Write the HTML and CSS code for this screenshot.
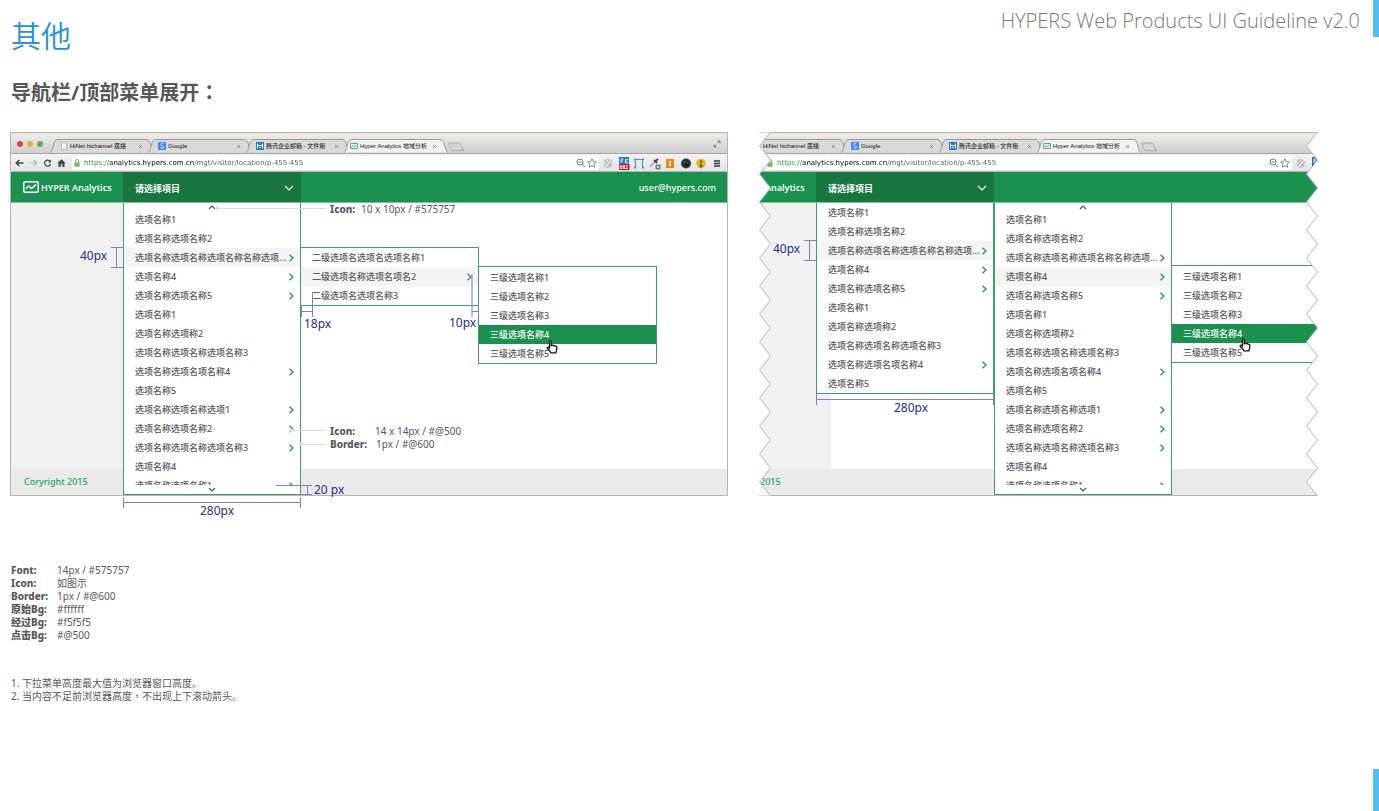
FILE: index.html
```html
<!DOCTYPE html>
<html lang="zh-CN">
<head>
<meta charset="utf-8">
<title>HYPERS Web Products UI Guideline v2.0</title>
<link rel="stylesheet" href="styles.css">
</head>
<body>
<svg class="sprite" aria-hidden="true">
  <symbol id="right" viewBox="0 0 7 8"><path d="M1.5 .8 5 4 1.5 7.200" fill="none" stroke="#1d9a55" stroke-width="1.300"/></symbol>
  <symbol id="up" viewBox="0 0 8 5"><path d="M1 4 4 1 7 4" fill="none" stroke="#575757" stroke-width="1.200"/></symbol>
  <symbol id="down" viewBox="0 0 8 5"><path d="M1 1 4 4 7 1" fill="none" stroke="#575757" stroke-width="1.200"/></symbol>
  <symbol id="tab" viewBox="0 0 104 14"><path d="M0 13.500C3 13 3 1 7 .5H97C101 1 101 13 104 13.500" fill="currentColor" stroke="#9a9a9a"/></symbol>
  <symbol id="newtab" viewBox="0 0 18 10"><path d="M1.500 1H12C14 1 15 8 17 8.500H6C3 8.500 3 3 1.500 1Z" fill="#d6d6d6" stroke="#aaa"/></symbol>
  <symbol id="close" viewBox="0 0 5 5"><path d="M1 1 4 4M4 1 1 4" stroke="#777" stroke-width=".8"/></symbol>
  <symbol id="doc" viewBox="0 0 8 8"><path d="M1.500 .5H4.500L6.500 2.500V7.500H1.500Z" fill="#fff" stroke="#999" stroke-width=".7"/></symbol>
  <symbol id="goog" viewBox="0 0 8 8"><rect width="8" height="8" rx="1" fill="#4285f4"/><path d="M5.500 1.300H3.600A1.200 1.200 0 1 0 4.500 3.500L4.800 4.200A1.300 1.300 0 1 1 3 4.800" fill="none" stroke="#fff" stroke-width=".8"/></symbol>
  <symbol id="mail" viewBox="0 0 8 8"><rect width="8" height="8" fill="#1b7fc4"/><path d="M1.500 1.500V6.500M6.500 1.500V6.500M1.500 3.500H6.500M3 5.500H5" stroke="#fff"/></symbol>
  <symbol id="chart" viewBox="0 0 16 12"><rect x=".8" y=".8" width="14.400" height="10.400" rx="1.200" fill="none" stroke="currentColor" stroke-width="1.500"/><path d="M2.800 7.800 5.800 5 8.500 7.500 13 3.600" fill="none" stroke="currentColor" stroke-width="1.500"/></symbol>
  <symbol id="expand" viewBox="0 0 8 8"><path d="M4.500 1H7V3.500M7 1 4.700 3.300M3.500 7H1V4.500M1 7 3.300 4.700" fill="none" stroke="#777"/></symbol>
  <symbol id="back" viewBox="0 0 9 8"><path d="M8.500 4H1.500M4.300 1 1.300 4 4.300 7" fill="none" stroke="#444" stroke-width="1.500"/></symbol>
  <symbol id="forward" viewBox="0 0 9 8"><path d="M.5 4H7.500M4.700 1 7.700 4 4.700 7" fill="none" stroke="#bbb" stroke-width="1.200"/></symbol>
  <symbol id="reload" viewBox="0 0 8 8"><path d="M6.500 2.300A3 3 0 1 0 7 5" fill="none" stroke="#444" stroke-width="1.300"/><path d="M7.500 .5V3.500H4.500Z" fill="#444"/></symbol>
  <symbol id="home" viewBox="0 0 9 8"><path d="M4.500 .3 8.800 4.300H7.500V8H5.300V5.300H3.700V8H1.500V4.300H.2Z" fill="#444"/></symbol>
  <symbol id="lock" viewBox="0 0 6 8"><path d="M1.500 3.500V2A1.500 1.500 0 0 1 4.500 2V3.500" fill="none" stroke="#999"/><rect x=".3" y="3.300" width="5.400" height="4.400" rx=".6" fill="#79c15a"/></symbol>
  <symbol id="lens" viewBox="0 0 10 10"><circle cx="4" cy="4" r="3" fill="none" stroke="#777"/><path d="M2.500 4H5.500M6.200 6.200 9 9" stroke="#777"/></symbol>
  <symbol id="star" viewBox="0 0 10 10"><path d="M5 .8 6.300 3.600 9.400 4 7.100 6.100 7.700 9.200 5 7.700 2.300 9.200 2.900 6.100 .6 4 3.700 3.600Z" fill="#fff" stroke="#777" stroke-width=".9"/></symbol>
  <symbol id="swirl" viewBox="0 0 12 12"><circle cx="6" cy="6" r="4.500" fill="#c4c4c4"/><path d="M2.500 6 6 2.500M4 9 8.500 3.500M7 9.500 10 6" stroke="#fff"/><path d="M3.500 3.500 5 5M7 7 9 8.500" stroke="#888"/></symbol>
  <symbol id="fe" viewBox="0 0 12 13"><rect x="1" width="10" height="8" fill="#2a78c8"/><path d="M3 6V2H5.500M3 4H5M10 6H7.500V2.500H10M7.500 4.200H9.500" fill="none" stroke="#fff" stroke-width=".8"/><rect x="1" y="7" width="10.500" height="6" rx="1" fill="#b80d1a"/></symbol>
  <symbol id="frame" viewBox="0 0 12 12"><path d="M1.500 2H10.500M2.500 10V3M9.500 10V3" fill="none" stroke="#4d94c4" stroke-width="1.200"/><path d="M1 1H3V3H1ZM9 1H11V3H9ZM1 9H3V11H1ZM9 9H11V11H9Z" fill="#4d94c4"/></symbol>
  <symbol id="picker" viewBox="0 0 12 12"><path d="M1 9 6 4" stroke="#999" stroke-width="1.500"/><path d="M5 2.500 8 5.500M6.500 4 9 1.500" stroke="#444" stroke-width="1.800"/><rect x="6.500" y="7" width="5" height="5" rx="1" fill="#777"/><rect x="8" y="8.500" width="2" height="2" fill="#ddd"/></symbol>
  <symbol id="orange" viewBox="0 0 12 12"><rect x="2" y="1.500" width="8" height="9" fill="#f58220"/><path d="M6 3.500V8.500" stroke="#fff" stroke-width="1.500"/></symbol>
  <symbol id="lensball" viewBox="0 0 12 12"><circle cx="6" cy="6" r="5" fill="#333"/><circle cx="6" cy="6" r="2.800" fill="#111"/><path d="M4 7A2.200 2.200 0 0 1 6 4" fill="none" stroke="#35b35e"/><path d="M7 4.500 8 6.500" stroke="#507de0"/></symbol>
  <symbol id="yellow" viewBox="0 0 12 12"><circle cx="6" cy="6" r="4.800" fill="#f3b41b"/><path d="M4.500 7 6 5.500 8 8.500 6.500 10H5Z" fill="#7a5a1d"/><circle cx="6" cy="4" r="1.500" fill="#4f8a3c"/></symbol>
  <symbol id="burger" viewBox="0 0 12 12"><path d="M3 3.500H9M3 6H9M3 8.500H9" stroke="#333" stroke-width="1.500"/></symbol>
  <symbol id="hand" viewBox="0 0 12 14"><path d="M3.500 8V1.800C3.500 .5 5.300 .5 5.300 1.800V5.500C6 4.800 7 5 7.200 5.700 8 5.200 8.900 5.500 9.100 6.200 10 6 10.800 6.500 10.800 7.300V9.500L9.800 12.800H4.800L3.800 11 1.300 8.500C.7 7.500 2 6.700 2.700 7.300Z" fill="#fff" stroke="#111" stroke-width="1.300"/></symbol>
</svg>

<header class="page-head">
  <h1>其他</h1>
  <p class="product">HYPERS Web Products UI Guideline v2.0</p>
</header>

<main class="page">
  <h2>导航栏/顶部菜单展开<span class="mid" lang="zh-TW">：</span></h2>

  <div class="figures">
    <figure class="figure">
      <div class="window">
        <div class="tabstrip">
          <span class="lights"><i class="red"></i><i class="amber"></i><i class="green"></i></span>
          <button class="tab"><svg class="tab-shape"><use href="#tab"/></svg><svg class="fav"><use href="#doc"/></svg><span>HiNet hichannel 廣播</span><svg class="x"><use href="#close"/></svg></button>
          <button class="tab"><svg class="tab-shape"><use href="#tab"/></svg><svg class="fav"><use href="#goog"/></svg><span>Google</span><svg class="x"><use href="#close"/></svg></button>
          <button class="tab"><svg class="tab-shape"><use href="#tab"/></svg><svg class="fav"><use href="#mail"/></svg><span>腾讯企业邮箱 - 文件箱</span><svg class="x"><use href="#close"/></svg></button>
          <button class="tab active"><svg class="tab-shape"><use href="#tab"/></svg><svg class="fav chart"><use href="#chart"/></svg><span>Hyper Analytics 地域分析</span><svg class="x"><use href="#close"/></svg></button>
          <button class="newtab" aria-label="New tab"><svg><use href="#newtab"/></svg></button>
          <svg class="expand"><use href="#expand"/></svg>
        </div>
        <div class="toolbar">
          <div class="history"><svg><use href="#back"/></svg><svg><use href="#forward"/></svg><svg><use href="#reload"/></svg><svg><use href="#home"/></svg></div>
          <div class="omnibox"><svg class="lock"><use href="#lock"/></svg><input type="text" aria-label="Address" value="https://analytics.hypers.com.cn/mgt/visitor/location/p-455-455"><svg><use href="#lens"/></svg><svg><use href="#star"/></svg></div>
          <div class="extensions"><svg><use href="#swirl"/></svg><span class="ext-badge"><svg><use href="#fe"/></svg><b>082</b></span><svg><use href="#frame"/></svg><svg><use href="#picker"/></svg><svg><use href="#orange"/></svg><svg><use href="#lensball"/></svg><svg><use href="#yellow"/></svg><svg><use href="#burger"/></svg></div>
        </div>
        <nav class="navbar">
          <a class="brand" href="#"><svg><use href="#chart"/></svg>HYPER Analytics</a>
          <button class="picker">请选择项目<svg viewBox="0 0 10 6"><path d="M1 1 5 5 9 1" fill="none" stroke="#fff" stroke-width="1.200"/></svg></button>
          <a class="user" href="#">user@hypers.com</a>
        </nav>
        <div class="content"></div>
        <footer class="foot">Coryright 2015</footer>
      </div>

      <div class="menu scroll first">
        <svg class="arrow-up"><use href="#up"/></svg>
        <ul>
          <li><a href="#">选项名称1</a></li>
          <li><a href="#">选项名称选项名称2</a></li>
          <li><a class="hover" href="#">选项名称选项名称选项名称名称选项...<svg><use href="#right"/></svg></a></li>
          <li><a href="#">选项名称4<svg><use href="#right"/></svg></a></li>
          <li><a href="#">选项名称选项名称5<svg><use href="#right"/></svg></a></li>
          <li><a href="#">选项名称1</a></li>
          <li><a href="#">选项名称选项称2</a></li>
          <li><a href="#">选项名称选项名称选项名称3</a></li>
          <li><a href="#">选项名称选项名项名称4<svg><use href="#right"/></svg></a></li>
          <li><a href="#">选项名称5</a></li>
          <li><a href="#">选项名称选项名称选项1<svg><use href="#right"/></svg></a></li>
          <li><a href="#">选项名称选项名称2<svg><use href="#right"/></svg></a></li>
          <li><a href="#">选项名称选项名称选项名称3<svg><use href="#right"/></svg></a></li>
          <li><a href="#">选项名称4</a></li>
          <li><a href="#">选项名称选项名称1<svg><use href="#right"/></svg></a></li>
        </ul>
        <svg class="arrow-down"><use href="#down"/></svg>
      </div>
      <div class="menu second">
        <ul>
          <li><a href="#">二级选项名选项名选项名称1</a></li>
          <li><a class="hover" href="#">二级选项名称选项名项名2<svg><use href="#right"/></svg></a></li>
          <li><a href="#">二级选项名选项名称3</a></li>
        </ul>
      </div>
      <div class="menu third">
        <ul>
          <li><a href="#">三级选项名称1</a></li>
          <li><a href="#">三级选项名称2</a></li>
          <li><a href="#">三级选项名称3</a></li>
          <li><a class="active" href="#">三级选项名称4</a></li>
          <li><a href="#">三级选项名称5</a></li>
        </ul>
      </div>

      <svg class="notes-layer" width="718" height="390" viewBox="10 132 718 390">
        <g class="dim">
          <path d="M111 247.500H123M111 267.500H123M116.500 247V268"/>
          <path d="M312.500 292V317M301.500 305V317M301 311.500H312"/>
          <path class="soft" d="M472 274V317"/>
          <path d="M478.500 305V317M472 311.500H478"/>
          <path d="M276 485.500H312M301 494.500H312M307.500 485V495"/>
          <path d="M123.500 497V508M300.500 497V508M123 502.500H301"/>
        </g>
        <g class="dim-text">
          <text x="80" y="260">40px</text>
          <text x="304" y="328">18px</text>
          <text x="449" y="327">10px</text>
          <text x="314" y="494">20 px</text>
          <text x="200" y="515">280px</text>
        </g>
        <g class="lead">
          <path d="M217 208.500H326M291 430.500H326M301 444.500H326"/>
          <circle cx="217" cy="208" r="2"/><circle cx="291" cy="430" r="2"/><circle cx="301" cy="444" r="2"/>
        </g>
        <g class="lead-text">
          <text x="330" y="213" class="strong">Icon:</text><text x="361" y="213">10 x 10px / #575757</text>
          <text x="330" y="435" class="strong">Icon:</text><text x="375" y="435">14 x 14px / #@500</text>
          <text x="330" y="448" class="strong">Border:</text><text x="376" y="448">1px / #@600</text>
        </g>
        <use href="#hand" x="546" y="340" width="12" height="14"/>
      </svg>
    </figure>

    <figure class="figure torn">
      <div class="window">
        <div class="tabstrip">
          <span class="lights"><i class="red"></i><i class="amber"></i><i class="green"></i></span>
          <button class="tab"><svg class="tab-shape"><use href="#tab"/></svg><svg class="fav"><use href="#doc"/></svg><span>HiNet hichannel 廣播</span><svg class="x"><use href="#close"/></svg></button>
          <button class="tab"><svg class="tab-shape"><use href="#tab"/></svg><svg class="fav"><use href="#goog"/></svg><span>Google</span><svg class="x"><use href="#close"/></svg></button>
          <button class="tab"><svg class="tab-shape"><use href="#tab"/></svg><svg class="fav"><use href="#mail"/></svg><span>腾讯企业邮箱 - 文件箱</span><svg class="x"><use href="#close"/></svg></button>
          <button class="tab active"><svg class="tab-shape"><use href="#tab"/></svg><svg class="fav chart"><use href="#chart"/></svg><span>Hyper Analytics 地域分析</span><svg class="x"><use href="#close"/></svg></button>
          <button class="newtab" aria-label="New tab"><svg><use href="#newtab"/></svg></button>
        </div>
        <div class="toolbar">
          <div class="history"></div>
          <div class="omnibox"><svg class="lock"><use href="#lock"/></svg><input type="text" aria-label="Address" value="https://analytics.hypers.com.cn/mgt/visitor/location/p-455-455"><svg><use href="#lens"/></svg><svg><use href="#star"/></svg></div>
          <div class="extensions"><svg><use href="#swirl"/></svg><svg><use href="#fe"/></svg><svg></svg><svg></svg><svg></svg><svg></svg><svg></svg><svg></svg></div>
        </div>
        <nav class="navbar">
          <a class="brand" href="#"><svg><use href="#chart"/></svg>HYPER Analytics</a>
          <button class="picker">请选择项目<svg viewBox="0 0 10 6"><path d="M1 1 5 5 9 1" fill="none" stroke="#fff" stroke-width="1.200"/></svg></button>
        </nav>
        <div class="content"></div>
        <footer class="foot">Coryright 2015</footer>
      </div>

      <div class="menu first">
        <ul>
          <li><a href="#">选项名称1</a></li>
          <li><a href="#">选项名称选项名称2</a></li>
          <li><a class="hover" href="#">选项名称选项名称选项名称名称选项...<svg><use href="#right"/></svg></a></li>
          <li><a href="#">选项名称4<svg><use href="#right"/></svg></a></li>
          <li><a href="#">选项名称选项名称5<svg><use href="#right"/></svg></a></li>
          <li><a href="#">选项名称1</a></li>
          <li><a href="#">选项名称选项称2</a></li>
          <li><a href="#">选项名称选项名称选项名称3</a></li>
          <li><a href="#">选项名称选项名项名称4<svg><use href="#right"/></svg></a></li>
          <li><a href="#">选项名称5</a></li>
        </ul>
      </div>
      <div class="menu scroll second">
        <svg class="arrow-up"><use href="#up"/></svg>
        <ul>
          <li><a href="#">选项名称1</a></li>
          <li><a href="#">选项名称选项名称2</a></li>
          <li><a href="#">选项名称选项名称选项名称名称选项...<svg><use href="#right"/></svg></a></li>
          <li><a class="hover" href="#">选项名称4<svg><use href="#right"/></svg></a></li>
          <li><a href="#">选项名称选项名称5<svg><use href="#right"/></svg></a></li>
          <li><a href="#">选项名称1</a></li>
          <li><a href="#">选项名称选项称2</a></li>
          <li><a href="#">选项名称选项名称选项名称3</a></li>
          <li><a href="#">选项名称选项名项名称4<svg><use href="#right"/></svg></a></li>
          <li><a href="#">选项名称5</a></li>
          <li><a href="#">选项名称选项名称选项1<svg><use href="#right"/></svg></a></li>
          <li><a href="#">选项名称选项名称2<svg><use href="#right"/></svg></a></li>
          <li><a href="#">选项名称选项名称选项名称3<svg><use href="#right"/></svg></a></li>
          <li><a href="#">选项名称4</a></li>
          <li><a href="#">选项名称选项名称1<svg><use href="#right"/></svg></a></li>
        </ul>
        <svg class="arrow-down"><use href="#down"/></svg>
      </div>
      <div class="menu third">
        <ul>
          <li><a href="#">三级选项名称1</a></li>
          <li><a href="#">三级选项名称2</a></li>
          <li><a href="#">三级选项名称3</a></li>
          <li><a class="active" href="#">三级选项名称4</a></li>
          <li><a href="#">三级选项名称5</a></li>
        </ul>
      </div>

      <svg class="notes-layer" width="559" height="364" viewBox="759 132 559 364">
        <g class="dim">
          <path d="M804 240.500H816M804 260.500H816M809.500 240V261"/>
          <path d="M816.500 394V405M993.500 394V405M816 399.500H994"/>
        </g>
        <g class="dim-text">
          <text x="773" y="253">40px</text>
          <text x="894" y="412">280px</text>
        </g>
        <use href="#hand" x="1239" y="338" width="12" height="14"/>
      </svg>
      <svg class="tear left" viewBox="0 0 12 364"><path class="cut" d="M-1 0H11.500L.5 14 11.500 28 .5 42 11.500 56 .5 70 11.500 84 .5 98 11.500 112 .5 126 11.500 140 .5 154 11.500 168 .5 182 11.500 196 .5 210 11.500 224 .5 238 11.500 252 .5 266 11.500 280 .5 294 11.500 308 .5 322 11.500 336 .5 350 11.500 364H-1Z"/></svg>
      <svg class="tear right" viewBox="0 0 12 364"><path class="cut" d="M13 0H11.500L.5 14 11.500 28 .5 42 11.500 56 .5 70 11.500 84 .5 98 11.500 112 .5 126 11.500 140 .5 154 11.500 168 .5 182 11.500 196 .5 210 11.500 224 .5 238 11.500 252 .5 266 11.500 280 .5 294 11.500 308 .5 322 11.500 336 .5 350 11.500 364H13Z"/></svg>
    </figure>
  </div>

  <dl class="spec">
    <dt>Font:</dt><dd>14px / #575757</dd>
    <dt>Icon:</dt><dd>如图示</dd>
    <dt>Border:</dt><dd>1px / #@600</dd>
    <dt>原始Bg:</dt><dd>#ffffff</dd>
    <dt>经过Bg:</dt><dd>#f5f5f5</dd>
    <dt>点击Bg:</dt><dd>#@500</dd>
  </dl>

  <ol class="rules">
    <li>下拉菜单高度最大值为浏览器窗口高度。</li>
    <li>当内容不足前浏览器高度<span class="mid" lang="zh-TW">，</span>不出现上下滚动箭头。</li>
  </ol>
</main>
</body>
</html>
```
FILE: styles.css
```css
* { box-sizing: border-box; }

body {
  margin: 0;
  min-height: 100vh;
  position: relative;
  background: #fff;
  color: #575757;
  font: 10px/13px "Noto Sans", "Noto Sans CJK SC", sans-serif;
}

/* Accent marks on the right edge of the sheet */
body::before,
body::after {
  content: "";
  position: absolute;
  right: 0;
  width: 6px;
  background: #55bdf0;
}
body::before { top: 0; height: 37px; }
body::after { bottom: 0; height: 42px; }

.sprite { display: none; }
svg { display: block; flex: none; }
a { color: inherit; text-decoration: none; }
ul, ol, dl, dd, figure { margin: 0; padding: 0; }
ul, ol { list-style: none; }
button { border: 0; padding: 0; background: none; font: inherit; color: inherit; }

/* Full-width punctuation centred in its cell */
.mid { font-family: "Noto Sans CJK TC", sans-serif; line-height: 0; }

.page-head {
  display: flex;
  justify-content: space-between;
  align-items: flex-start;
  padding: 6px 19px 0 11px;
}
h1 {
  margin: 0;
  padding-top: 8px;
  font-size: 30px;
  font-weight: 350;
  line-height: 44px;
  color: #2490d8;
}
.product {
  margin: 0;
  font: 300 20px/30px "Open Sans", sans-serif;
  color: #777;
}
.page { padding: 21px 61px 20px 10px; }
h2 {
  margin: 0 0 25px 1px;
  font-size: 20px;
  font-weight: 700;
  line-height: 28px;
}

.figures {
  display: grid;
  grid-template-columns: 718fr 559fr;
  gap: 31px;
}
.figure { position: relative; min-width: 0; }
.torn { overflow: hidden; }
.torn .window { margin: 0 -103px 0 -56px; }

/* Browser window */
.window {
  display: flex;
  flex-direction: column;
  min-height: 364px;
  border: 1px solid #b4b4b4;
  background: #fff;
}
.tabstrip {
  display: flex;
  align-items: flex-end;
  height: 21px;
  padding: 0 6px 0 6px;
  border-top: 1px solid #f5e6bd;
  border-bottom: 1px solid #a5a5a5;
  background: linear-gradient(#ececec, #cfcfcf) padding-box;
}
.lights { display: flex; gap: 4px; width: 33px; padding-bottom: 6px; }
.lights i { width: 6px; height: 6px; border-radius: 50%; }
.red { background: #e0443e; }
.amber { background: #eba93a; }
.green { background: #62ad45; }
.tab {
  position: relative;
  display: flex;
  align-items: center;
  gap: 2px;
  width: 104px;
  height: 14px;
  margin: 0 -6px 0 0;
  padding: 0 11px 0 10px;
  font: 6px/12px "Liberation Sans", "Noto Sans CJK SC", sans-serif;
  color: #111;
  text-align: left;
}
.tab.active { z-index: 1; padding-left: 6px; }
.tab span { position: relative; flex: 1; white-space: nowrap; }
.tab-shape { position: absolute; inset: 0; width: 104px; height: 14px; color: #d9d9d9; }
.active .tab-shape { color: #f1f1f1; }
.fav { position: relative; width: 8px; height: 8px; }
.chart { color: #1b9150; }
.x { position: relative; width: 5px; height: 5px; }
.newtab svg { width: 18px; height: 10px; margin: 0 0 1px 5px; }
.expand { width: 8px; height: 8px; margin: 0 0 5px auto; }

.toolbar {
  display: flex;
  align-items: center;
  height: 18px;
  border-bottom: 1px solid #b5b5b5;
  padding: 1px 4px 0 4px;
  background: linear-gradient(#f3f3f3, #e4e4e4);
}
.history { display: flex; gap: 5px; width: 57px; }
.history svg { width: 9px; height: 8px; }
.omnibox {
  flex: 1;
  display: flex;
  align-items: center;
  gap: 1px;
  height: 14px;
  padding: 0 2px;
  border-radius: 2px;
  background: #fff;
}
.omnibox svg { width: 10px; height: 10px; }
.omnibox .lock { width: 6px; height: 8px; }
.omnibox input {
  flex: 1;
  min-width: 0;
  height: 12px;
  border: 0;
  padding: 0 0 0 3px;
  font: 7px/12px "DejaVu Sans", sans-serif;
  color: transparent;
  background: linear-gradient(90deg, #1a9a3c 22px, #555 22px 29px, #000 29px 113px, #555 113px) text;
}
.extensions {
  display: flex;
  align-items: center;
  justify-content: space-between;
  width: 121px;
  margin-left: 3px;
}
.extensions svg { width: 12px; height: 13px; }
.ext-badge { position: relative; }
.ext-badge b { position: absolute; left: 2px; bottom: 0; font-size: 5px; line-height: 6px; color: #fff; }

/* Product header */
.navbar {
  display: flex;
  align-items: center;
  height: 31px;
  border-bottom: 1px solid #7cc09a;
  background: #1b9150;
  color: #fff;
  font-size: 9px;
  font-weight: 600;
}
.brand { display: flex; align-items: center; gap: 2px; width: 112px; padding-left: 12px; white-space: nowrap; }
.brand svg { width: 16px; height: 12px; }
.picker {
  display: flex;
  align-items: center;
  justify-content: space-between;
  align-self: stretch;
  width: 178px;
  padding: 2px 7px 0 12px;
  background: #187640;
  font-weight: 700;
}
.picker svg { width: 10px; height: 6px; }
.user { margin-left: auto; padding-right: 11px; font-weight: 500; }
.content {
  flex: 1;
  background: linear-gradient(90deg, #f1f1f1 127px, #fff 127px);
}
.foot {
  height: 26px;
  padding-left: 13px;
  background: #eaeaea;
  color: #22a35c;
  font-size: 9px;
  font-weight: 500;
  line-height: 25px;
}

/* Drop-down menus */
.menu {
  position: absolute;
  width: 179px;
  border: 1px solid #3ba06c;
  background: #fff;
  font-size: 9px;
  font-weight: 500;
}
.menu a {
  display: flex;
  align-items: center;
  justify-content: space-between;
  height: 19px;
  padding: 0 5px 0 11px;
  white-space: nowrap;
}
.menu li svg { width: 7px; height: 8px; }
.hover { background: #f4f4f4; }
.menu .active { background: #1b9150; color: #fff; }
.scroll ul { height: 275px; overflow: hidden; }
.arrow-up, .arrow-down { width: 8px; height: 5px; margin: 2px auto 0; }
.arrow-down { margin-bottom: 2px; }

.first { left: 113px; top: 71px; width: 178px; border-top: 0; }
.second { left: 290px; top: 115px; }
.third { left: 468px; top: 134px; padding-top: 1px; }
.torn .first { left: 57px; }
.torn .second { left: 235px; top: 71px; width: 178px; border-top: 0; }
.torn .third { left: 412px; top: 133px; right: -2px; width: auto; }

/* Measurements and callouts */
.notes-layer { position: absolute; left: 0; top: 0; pointer-events: none; }
.dim { fill: none; stroke: #7f83bd; }
.dim .soft { stroke: #8b8fca; stroke-width: 2; opacity: .6; }
.dim-text { fill: #272c85; font-size: 12px; }
.lead { fill: #dcdcdc; stroke: none; }
.lead path { fill: none; stroke: #dcdcdc; }
.lead-text { fill: #575757; font-size: 10px; }
.strong { font-weight: 800; }

/* Torn edges */
.tear { position: absolute; top: 0; width: 12px; height: 364px; }
.tear.left { left: 0; }
.tear.right { right: 0; }
.cut { fill: #fff; stroke: #b4b4b4; }

.spec {
  display: grid;
  grid-template-columns: 46px 1fr;
  margin: 68px 0 0 1px;
}
.spec dt { font-weight: 800; white-space: nowrap; }
.rules { margin: 35px 0 0 1px; list-style: decimal inside; }
```
